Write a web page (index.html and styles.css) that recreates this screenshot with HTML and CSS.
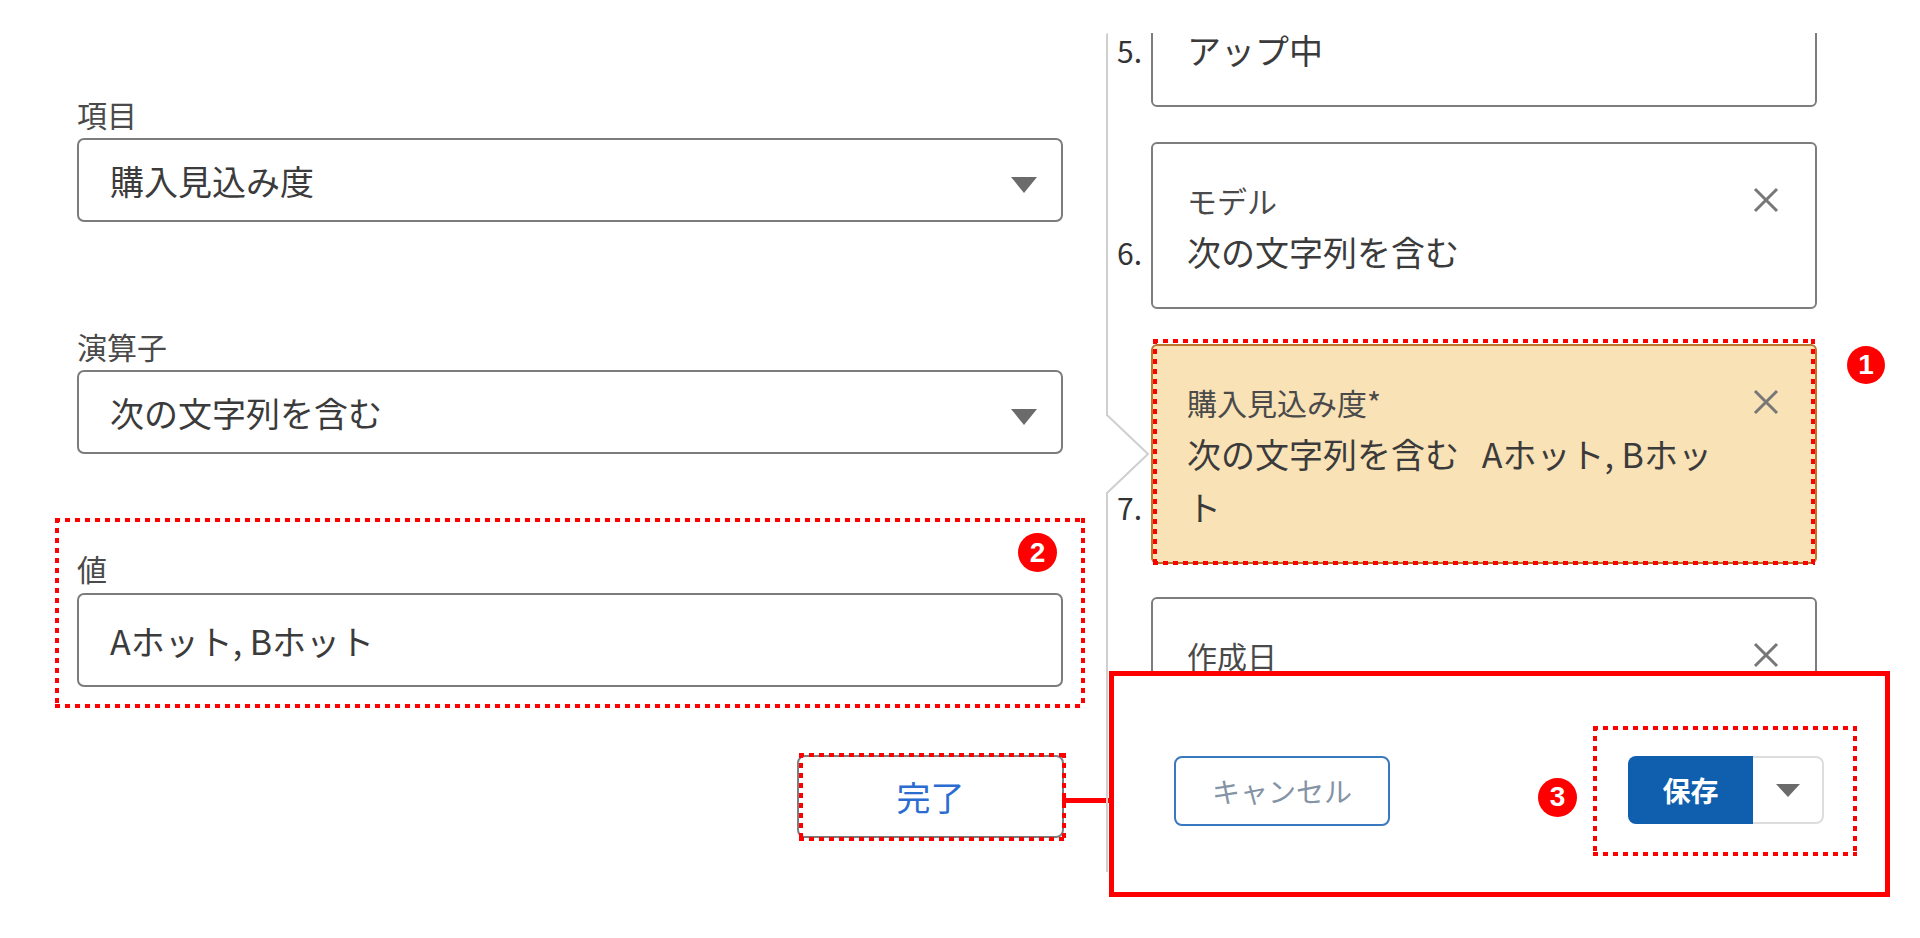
FILE: index.html
```html
<!DOCTYPE html>
<html lang="ja">
<head>
<meta charset="utf-8">
<title>フィルター編集</title>
<link rel="stylesheet" href="styles.css">
</head>
<body>
<div class="page">
  <section class="left">
    <div class="field">
      <div class="label">項目</div>
      <div class="select">
        <span>購入見込み度</span>
        <svg class="caret" width="26" height="16" viewBox="0 0 26 16"><polygon points="0,0 26,0 13,16"/></svg>
      </div>
    </div>
    <div class="field field-op">
      <div class="label">演算子</div>
      <div class="select">
        <span>次の文字列を含む</span>
        <svg class="caret" width="26" height="16" viewBox="0 0 26 16"><polygon points="0,0 26,0 13,16"/></svg>
      </div>
    </div>
    <div class="dotbox valbox">
      <span class="badge badge-2">2</span>
      <div class="label">値</div>
      <div class="input">Aホット, Bホット</div>
    </div>
    <div class="done-row">
      <button class="done">完了</button>
    </div>
  </section>

  <section class="right">
    <div class="list">
      <div class="list-inner">
        <div class="row">
          <div class="num num-top">5.</div>
          <div class="card card-top">
            <div class="card-text">
              <div class="card-value">アップ中</div>
            </div>
          </div>
        </div>
        <div class="row">
          <div class="num">6.</div>
          <div class="card">
            <div class="card-text">
              <div class="card-label">モデル</div>
              <div class="card-value">次の文字列を含む</div>
            </div>
            <div class="x"><svg width="26" height="26" viewBox="0 0 26 26"><path d="M2 2 L24 24 M24 2 L2 24"/></svg></div>
          </div>
        </div>
        <div class="row row-selected">
          <svg class="chevron" width="46" height="78" viewBox="0 0 46 78"><rect x="0" y="1" width="5" height="76" fill="#fff" stroke="none"/><polyline points="2,0 43,39 2,78" fill="none"/></svg>
          <div class="num">7.</div>
          <div class="card card-selected">
            <div class="card-text">
              <div class="card-label">購入見込み度*</div>
              <div class="card-value">次の文字列を含む&nbsp;&nbsp;&nbsp;Aホット, Bホット</div>
            </div>
            <div class="x"><svg width="26" height="26" viewBox="0 0 26 26"><path d="M2 2 L24 24 M24 2 L2 24"/></svg></div>
          </div>
          <span class="badge badge-1">1</span>
        </div>
        <div class="row">
          <div class="num"></div>
          <div class="card card-bottom">
            <div class="card-text">
              <div class="card-label">作成日</div>
            </div>
            <div class="x"><svg width="26" height="26" viewBox="0 0 26 26"><path d="M2 2 L24 24 M24 2 L2 24"/></svg></div>
          </div>
        </div>
      </div>
    </div>
    <div class="footer">
      <button class="cancel">キャンセル</button>
      <div class="save-area">
        <span class="badge badge-3">3</span>
        <div class="dotbox savebox">
          <div class="split">
            <button class="save">保存</button>
            <button class="save-menu"><svg width="24" height="13" viewBox="0 0 24 13"><polygon points="0,0 24,0 12,13"/></svg></button>
          </div>
        </div>
      </div>
    </div>
  </section>
</div>
</body>
</html>
```

FILE: styles.css
```css
:root {
  --dots:
    repeating-linear-gradient(90deg, #ff0000 0 5px, transparent 5px 10px) left top / 100% 4px no-repeat,
    repeating-linear-gradient(90deg, #ff0000 0 5px, transparent 5px 10px) left bottom / 100% 4px no-repeat,
    repeating-linear-gradient(180deg, #ff0000 0 5px, transparent 5px 10px) left top / 4px 100% no-repeat,
    repeating-linear-gradient(180deg, #ff0000 0 5px, transparent 5px 10px) right top / 4px 100% no-repeat;
}

* { box-sizing: border-box; }

html, body {
  margin: 0;
  padding: 0;
  background: #ffffff;
}

body {
  width: 1920px;
  height: 938px;
  overflow: hidden;
  font-family: "Noto Sans CJK JP", "Noto Sans", sans-serif;
  color: #3b3b3b;
}

button {
  font-family: inherit;
  cursor: pointer;
}

.page {
  display: flex;
  align-items: flex-start;
}

/* ---------- left column ---------- */
.left {
  margin-left: 55px;
  width: 1030px;
  padding-top: 96px;
  flex: 0 0 auto;
}

.field {
  padding: 0 22px;
}

.field-op {
  margin-top: 106px;
}

.label {
  font-size: 30px;
  line-height: 36px;
  color: #4a4a4a;
  margin-bottom: 6px;
}

.select {
  height: 84px;
  border: 2px solid #7c7c7c;
  border-radius: 7px;
  display: flex;
  align-items: center;
  justify-content: space-between;
  padding: 0 24px 0 31px;
  font-size: 34px;
  color: #3b3b3b;
}

.caret {
  fill: #6b6b6b;
  margin-top: 10px;
}

.dotbox {
  position: relative;
}

.dotbox::after {
  content: "";
  position: absolute;
  inset: 0;
  background: var(--dots);
  pointer-events: none;
}

.valbox {
  margin-top: 64px;
  padding: 32px 22px 21px;
}

.valbox .label {
  margin-bottom: 7px;
}

.input {
  height: 94px;
  border: 2px solid #7c7c7c;
  border-radius: 7px;
  display: flex;
  align-items: center;
  padding: 0 31px;
  font-size: 34px;
  color: #3b3b3b;
}

.badge {
  width: 39px;
  height: 39px;
  border-radius: 50%;
  background: #ff0000;
  color: #ffffff;
  font-family: "Liberation Sans", Arial, sans-serif;
  font-weight: bold;
  font-size: 28px;
  display: flex;
  align-items: center;
  justify-content: center;
  flex: 0 0 auto;
}

.badge-2 {
  position: absolute;
  top: 15px;
  right: 28px;
}

.done-row {
  margin-top: 47px;
  display: flex;
  justify-content: flex-end;
  padding-right: 21px;
}

.done {
  position: relative;
  width: 267px;
  height: 83px;
  border: 2px solid #7d7d7d;
  border-radius: 8px;
  background: #ffffff;
  color: #2b6cd1;
  font-size: 34px;
  padding: 0;
}

.done::after {
  content: "";
  position: absolute;
  top: -4px;
  left: 0;
  right: -4px;
  bottom: -5px;
  background: var(--dots);
  pointer-events: none;
}

.done::before {
  content: "";
  position: absolute;
  left: 100%;
  top: 41px;
  width: 48px;
  height: 5px;
  background: #ff0000;
}

/* ---------- right column ---------- */
.right {
  position: relative;
  margin-top: 33px;
  margin-left: 15px;
  width: 790px;
  flex: 0 0 auto;
}

.right::before {
  content: "";
  position: absolute;
  left: 6px;
  top: 0;
  width: 2px;
  height: 839px;
  background: #cfcfcf;
  border-top-left-radius: 2px;
}

.list {
  height: 638px;
  overflow: hidden;
  padding-left: 8px;
}

.list-inner {
  margin-top: -43px;
}

.row {
  position: relative;
  display: flex;
  align-items: flex-end;
  margin-bottom: 35px;
}

.row-selected {
  margin-bottom: 33px;
}

.num {
  flex: 0 0 43px;
  padding-left: 9px;
  padding-bottom: 40px;
  font-size: 30px;
  line-height: 34px;
  color: #333333;
}

.num-top {
  padding-bottom: 42px;
  line-height: 30px;
}

.card {
  flex: 0 0 666px;
  display: flex;
  border: 2px solid #7d7d7d;
  border-radius: 6px;
  background: #ffffff;
  padding: 31px 36px 29px 34px;
}

.card-top {
  padding-top: 41px;
  padding-bottom: 38px;
}

.card-top .card-value {
  line-height: 34px;
}

.card-bottom .card-label {
  line-height: 30px;
  margin-top: 10px;
}

.card-bottom .x {
  height: 30px;
  margin-top: 10px;
}

.card-text {
  flex: 1 1 auto;
  min-width: 0;
  margin-right: 31px;
}

.card-label {
  font-size: 30px;
  line-height: 50px;
  color: #4a4a4a;
}

.card-value {
  font-size: 34px;
  line-height: 53px;
  color: #3b3b3b;
}

.x {
  flex: 0 0 26px;
  height: 50px;
  display: flex;
  align-items: center;
}

.x svg {
  stroke: #777777;
  stroke-width: 3;
  fill: none;
}

.card-selected {
  position: relative;
  background: #f9e2b6;
  border-color: #b9782c;
}

.card-selected::after {
  content: "";
  position: absolute;
  top: -7px;
  left: 0;
  right: 0;
  bottom: -3px;
  background: var(--dots);
  pointer-events: none;
}

.chevron {
  position: absolute;
  left: -3px;
  top: 50%;
  margin-top: -39px;
  stroke: #cfcfcf;
  stroke-width: 2;
}

.badge-1 {
  align-self: flex-start;
  margin-left: 30px;
  margin-top: 2px;
  width: 38px;
  height: 38px;
}

/* ---------- footer ---------- */
.footer {
  position: relative;
  margin-left: 9px;
  width: 781px;
  height: 226px;
  border: 5px solid #ff0000;
  background: #ffffff;
  display: flex;
  align-items: center;
  justify-content: space-between;
  padding: 14px 28px 0 60px;
}

.cancel {
  width: 216px;
  height: 70px;
  border: 2px solid #3a78bf;
  border-radius: 8px;
  background: #ffffff;
  color: #8593a6;
  font-size: 28px;
  padding: 0;
}

.save-area {
  display: flex;
  align-items: center;
  gap: 16px;
}

.badge-3 {
  margin-top: 12px;
}

.savebox {
  padding: 30px 33px 32px 35px;
}

.split {
  display: flex;
  height: 68px;
}

.save {
  width: 125px;
  height: 68px;
  border: none;
  border-radius: 8px 0 0 8px;
  background: #0f5fae;
  color: #ffffff;
  font-weight: bold;
  font-size: 28px;
  padding: 0;
}

.save-menu {
  width: 71px;
  height: 68px;
  border: 2px solid #dddddd;
  border-left: none;
  border-radius: 0 8px 8px 0;
  background: #ffffff;
  display: flex;
  align-items: center;
  justify-content: center;
  padding: 0;
}

.save-menu svg {
  fill: #6b6b6b;
}
```
